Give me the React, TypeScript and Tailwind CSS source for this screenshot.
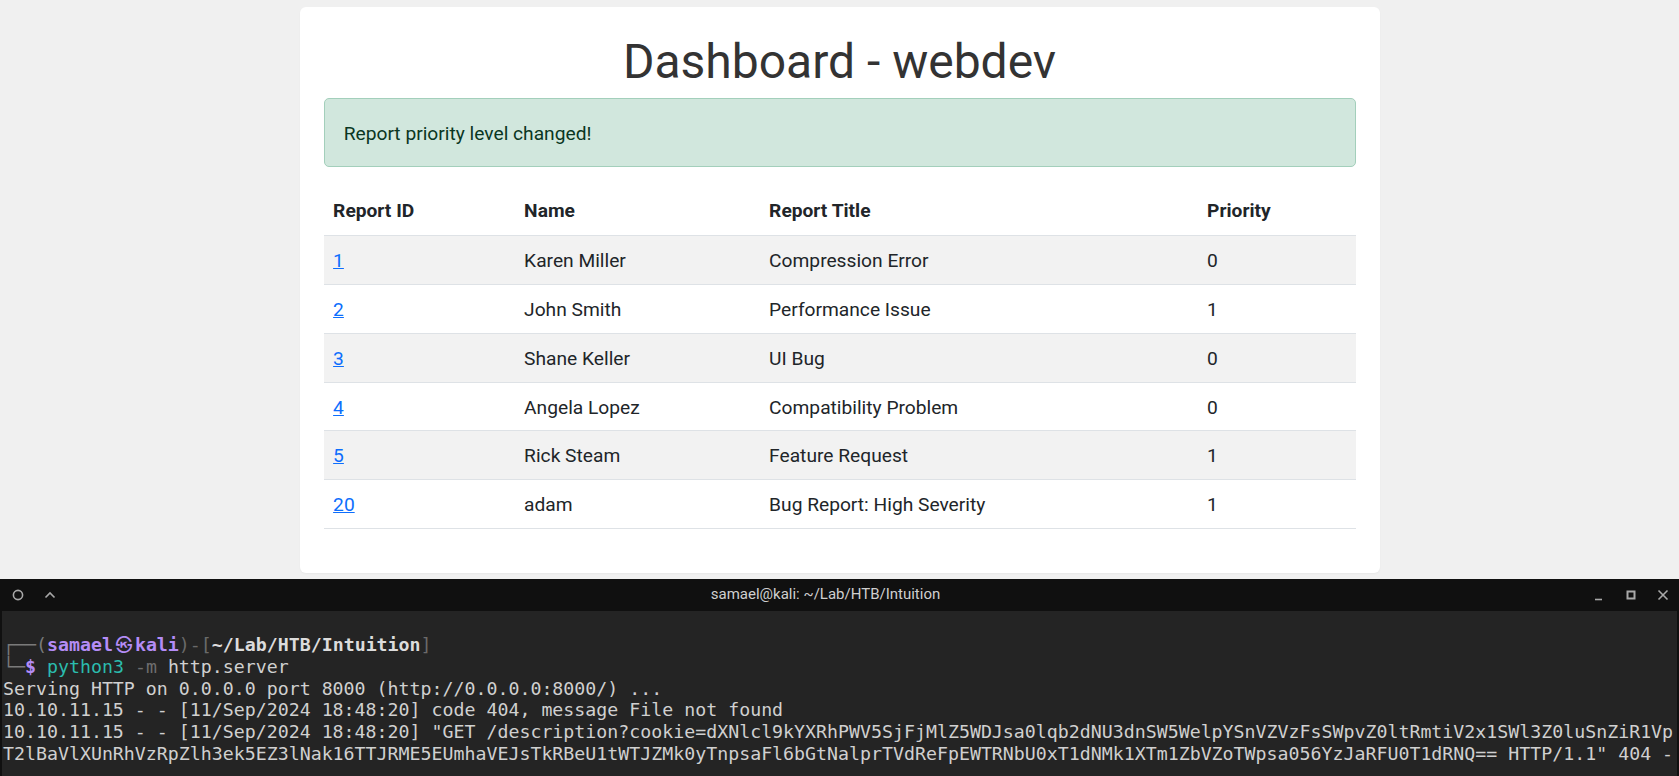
import React from "react";

const rows = [
  { id: "1", name: "Karen Miller", title: "Compression Error", p: "0" },
  { id: "2", name: "John Smith", title: "Performance Issue", p: "1" },
  { id: "3", name: "Shane Keller", title: "UI Bug", p: "0" },
  { id: "4", name: "Angela Lopez", title: "Compatibility Problem", p: "0" },
  { id: "5", name: "Rick Steam", title: "Feature Request", p: "1" },
  { id: "20", name: "adam", title: "Bug Report: High Severity", p: "1" },
];

const line5 =
  '10.10.11.15 - - [11/Sep/2024 18:48:20] "GET /description?cookie=dXNlcl9kYXRhPWV5SjFjMlZ5WDJsa0lqb2dNU3dnSW5WelpYSnVZVzFsSWpvZ0ltRmtiV2x1SWl3Z0luSnZiR1Vp';
const line6 =
  'T2lBaVlXUnRhVzRpZlh3ek5EZ3lNak16TTJRME5EUmhaVEJsTkRBeU1tWTJZMk0yTnpsaFl6bGtNalprTVdReFpEWTRNbU0xT1dNMk1XTm1ZbVZoTWpsa056YzJaRFU0T1dRNQ== HTTP/1.1" 404 -';

export default function App() {
  return (
    <div
      className="h-[776px] w-full overflow-hidden bg-[#f0f0f0] flex flex-col"
      style={{ fontFamily: "Roboto, 'Noto Sans', sans-serif" }}
    >
      {/* Card */}
      <div className="w-[1080px] mx-auto mt-[7px] bg-white rounded-[6px] p-[24px] shadow-[0_1px_2px_rgba(0,0,0,0.04)]">
        <h1 className="text-center text-[48px] leading-[57.6px] pt-[2px] mb-[7.6px] text-[#333333] font-normal">
          Dashboard - webdev
        </h1>
        <div className="border border-[#a3cfbb] bg-[#d1e7dd] text-[#0a3622] rounded-[5px] px-[19.2px] pt-[20.8px] pb-[17.6px] text-[19.2px] leading-[28.8px] mb-[19.2px]">
          Report priority level changed!
        </div>
        <table className="w-full border-collapse mb-[19.2px] text-[19.2px] leading-[28.8px] text-[#212529] table-fixed">
          <colgroup>
            <col className="w-[191px]" />
            <col className="w-[245px]" />
            <col className="w-[438px]" />
            <col />
          </colgroup>
          <thead>
            <tr className="border-b border-[#dee2e6]">
              <th className="text-left font-bold px-[9.6px] pt-[10.8px] pb-[8.4px]">Report ID</th>
              <th className="text-left font-bold px-[9.6px] pt-[10.8px] pb-[8.4px]">Name</th>
              <th className="text-left font-bold px-[9.6px] pt-[10.8px] pb-[8.4px]">Report Title</th>
              <th className="text-left font-bold px-[9.6px] pt-[10.8px] pb-[8.4px]">Priority</th>
            </tr>
          </thead>
          <tbody>
            {rows.map((r, i) => (
              <tr
                key={r.id}
                className={
                  i % 2 === 0
                    ? "border-b border-[#dee2e6] bg-[#f2f2f2]"
                    : "border-b border-[#dee2e6] bg-white"
                }
              >
                <td className="px-[9.6px] pt-[11px] pb-[8.2px]">
                  <a href="#" className="text-[#0d6efd] underline">
                    {r.id}
                  </a>
                </td>
                <td className="px-[9.6px] pt-[11px] pb-[8.2px]">{r.name}</td>
                <td className="px-[9.6px] pt-[11px] pb-[8.2px]">{r.title}</td>
                <td className="px-[9.6px] pt-[11px] pb-[8.2px]">{r.p}</td>
              </tr>
            ))}
          </tbody>
        </table>
      </div>

      {/* Terminal */}
      <div className="mt-[6px] flex-1 flex flex-col bg-[#101010] overflow-hidden">
        <div className="h-[32px] flex items-center shrink-0">
          <div className="w-[66px] flex items-center">
            <svg width="12" height="12" viewBox="0 0 12 12" className="ml-[12px]">
              <circle cx="6" cy="6" r="4.6" fill="none" stroke="#a8a8a8" strokeWidth="1.6" />
            </svg>
            <svg width="12" height="8" viewBox="0 0 12 8" className="ml-[20px]">
              <polyline points="1.5,6.5 6,2 10.5,6.5" fill="none" stroke="#a8a8a8" strokeWidth="1.6" />
            </svg>
          </div>
          <div className="flex-1 text-center text-[15px] text-[#cfcfcf]">
            samael@kali: ~/Lab/HTB/Intuition
          </div>
          <div className="w-[94px] flex items-center">
            <svg width="10" height="12" viewBox="0 0 10 12" className="ml-[9px]">
              <line x1="1" y1="10.5" x2="8" y2="10.5" stroke="#a8a8a8" strokeWidth="1.6" />
            </svg>
            <svg width="10" height="10" viewBox="0 0 10 10" className="ml-[22px]">
              <rect x="1.5" y="1.5" width="7" height="7" fill="none" stroke="#a8a8a8" strokeWidth="2" />
            </svg>
            <svg width="12" height="12" viewBox="0 0 12 12" className="ml-[21px]">
              <line x1="1.5" y1="1.5" x2="10.5" y2="10.5" stroke="#a8a8a8" strokeWidth="1.6" />
              <line x1="10.5" y1="1.5" x2="1.5" y2="10.5" stroke="#a8a8a8" strokeWidth="1.6" />
            </svg>
          </div>
        </div>
        <div className="flex-1 mx-[2px] bg-[#242424] pl-[1px] pt-[1px] overflow-hidden">
          <div
            className="text-[18.25px] leading-[21.7px] text-[#d0d0d0] whitespace-pre"
            style={{ fontFamily: "'DejaVu Sans Mono', 'Liberation Mono', 'Noto Sans CJK KR', monospace" }}
          >
            <div>&nbsp;</div>
            <div>
              <span className="text-[#7a7a7a]">┌──(</span>
              <span className="text-[#b48cf6] font-bold">samael</span>
              <span className="inline-block w-[22px] text-center text-[#b48cf6] text-[17px]" style={{ fontFamily: "'Noto Sans CJK KR', sans-serif" }}>㉿</span>
              <span className="text-[#b48cf6] font-bold">kali</span>
              <span className="text-[#6a6a6a]">)-[</span>
              <span className="text-[#dcdcdc] font-bold">~/Lab/HTB/Intuition</span>
              <span className="text-[#6a6a6a]">]</span>
            </div>
            <div>
              <span className="text-[#7a7a7a]">└─</span>
              <span className="text-[#b48cf6] font-bold">$</span>
              <span> </span>
              <span className="text-[#2bbcae]">python3</span>
              <span> </span>
              <span className="text-[#6e6e6e]">-m</span>
              <span> http.server</span>
            </div>
            <div>Serving HTTP on 0.0.0.0 port 8000 (http://0.0.0.0:8000/) ...</div>
            <div>10.10.11.15 - - [11/Sep/2024 18:48:20] code 404, message File not found</div>
            <div>{line5}</div>
            <div>{line6}</div>
          </div>
        </div>
      </div>
    </div>
  );
}
